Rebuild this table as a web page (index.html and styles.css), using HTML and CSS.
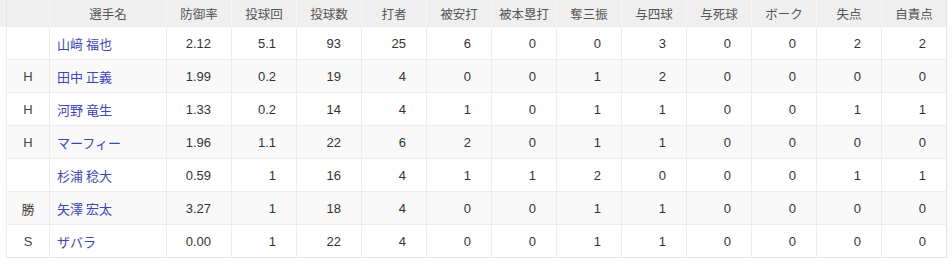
FILE: index.html
```html
<!DOCTYPE html>
<html lang="ja">
<head>
<meta charset="utf-8">
<link rel="stylesheet" href="styles.css">
</head>
<body>
<table class="stats">
  <colgroup>
    <col class="c-mark"><col class="c-name">
    <col class="c-num"><col class="c-num"><col class="c-num"><col class="c-num"><col class="c-num"><col class="c-num">
    <col class="c-num"><col class="c-num"><col class="c-num"><col class="c-num"><col class="c-num"><col class="c-num">
  </colgroup>
  <thead>
    <tr>
      <th></th><th>選手名</th><th>防御率</th><th>投球回</th><th>投球数</th><th>打者</th><th>被安打</th><th>被本塁打</th><th>奪三振</th><th>与四球</th><th>与死球</th><th>ボーク</th><th>失点</th><th>自責点</th>
    </tr>
  </thead>
  <tbody>
    <tr><td class="mark"></td><td class="name"><a href="#">山﨑 福也</a></td><td>2.12</td><td>5.1</td><td>93</td><td>25</td><td>6</td><td>0</td><td>0</td><td>3</td><td>0</td><td>0</td><td>2</td><td>2</td></tr>
    <tr><td class="mark">H</td><td class="name"><a href="#">田中 正義</a></td><td>1.99</td><td>0.2</td><td>19</td><td>4</td><td>0</td><td>0</td><td>1</td><td>2</td><td>0</td><td>0</td><td>0</td><td>0</td></tr>
    <tr><td class="mark">H</td><td class="name"><a href="#">河野 竜生</a></td><td>1.33</td><td>0.2</td><td>14</td><td>4</td><td>1</td><td>0</td><td>1</td><td>1</td><td>0</td><td>0</td><td>1</td><td>1</td></tr>
    <tr><td class="mark">H</td><td class="name"><a href="#">マーフィー</a></td><td>1.96</td><td>1.1</td><td>22</td><td>6</td><td>2</td><td>0</td><td>1</td><td>1</td><td>0</td><td>0</td><td>0</td><td>0</td></tr>
    <tr><td class="mark"></td><td class="name"><a href="#">杉浦 稔大</a></td><td>0.59</td><td>1</td><td>16</td><td>4</td><td>1</td><td>1</td><td>2</td><td>0</td><td>0</td><td>0</td><td>1</td><td>1</td></tr>
    <tr><td class="mark">勝</td><td class="name"><a href="#">矢澤 宏太</a></td><td>3.27</td><td>1</td><td>18</td><td>4</td><td>0</td><td>0</td><td>1</td><td>1</td><td>0</td><td>0</td><td>0</td><td>0</td></tr>
    <tr><td class="mark">S</td><td class="name"><a href="#">ザバラ</a></td><td>0.00</td><td>1</td><td>22</td><td>4</td><td>0</td><td>0</td><td>1</td><td>1</td><td>0</td><td>0</td><td>0</td><td>0</td></tr>
  </tbody>
</table>
</body>
</html>
```
FILE: styles.css
```css
html, body {
  margin: 0;
  padding: 0;
  background: #fff;
}

body {
  font-family: "Liberation Sans", Arial, "Noto Sans CJK JP", sans-serif;
  font-size: 13px;
  color: #333;
}

.stats {
  margin-left: 6px;
  width: 939px;
  table-layout: fixed;
  border-collapse: collapse;
  border: 1px solid #e4e4e4;
  border-top: none;
  box-shadow: 0 1px 1px rgba(0, 0, 0, 0.07);
}

.c-mark { width: 43px; }
.c-name { width: 117px; }
.c-num { width: 65px; }

.stats th {
  height: 26px;
  padding: 0;
  background: #efefef;
  color: #555;
  font-weight: normal;
  text-align: center;
  border-left: 1px solid #f7f7f7;
  font-family: "Noto Sans CJK JP", sans-serif;
  font-size: 12.5px;
}

.stats th:first-child {
  border-left: none;
  box-shadow: -7px 0 0 #efefef;
}

.stats td {
  height: 32px;
  padding: 0 20px 0 0;
  text-align: right;
  border-top: 1px solid #ececec;
  border-left: 1px solid #ececec;
  color: #333;
}

.stats tbody tr:nth-child(even) td {
  background: #f9f9f9;
}

.stats td.mark {
  padding: 0;
  text-align: center;
  color: #444;
  font-family: "Liberation Sans", "Noto Sans CJK JP", sans-serif;
}

.stats td.name {
  padding: 0 0 0 7px;
  text-align: left;
}

.name a {
  color: #3a46b3;
  text-decoration: none;
  font-family: "Noto Sans CJK JP", sans-serif;
}
```
